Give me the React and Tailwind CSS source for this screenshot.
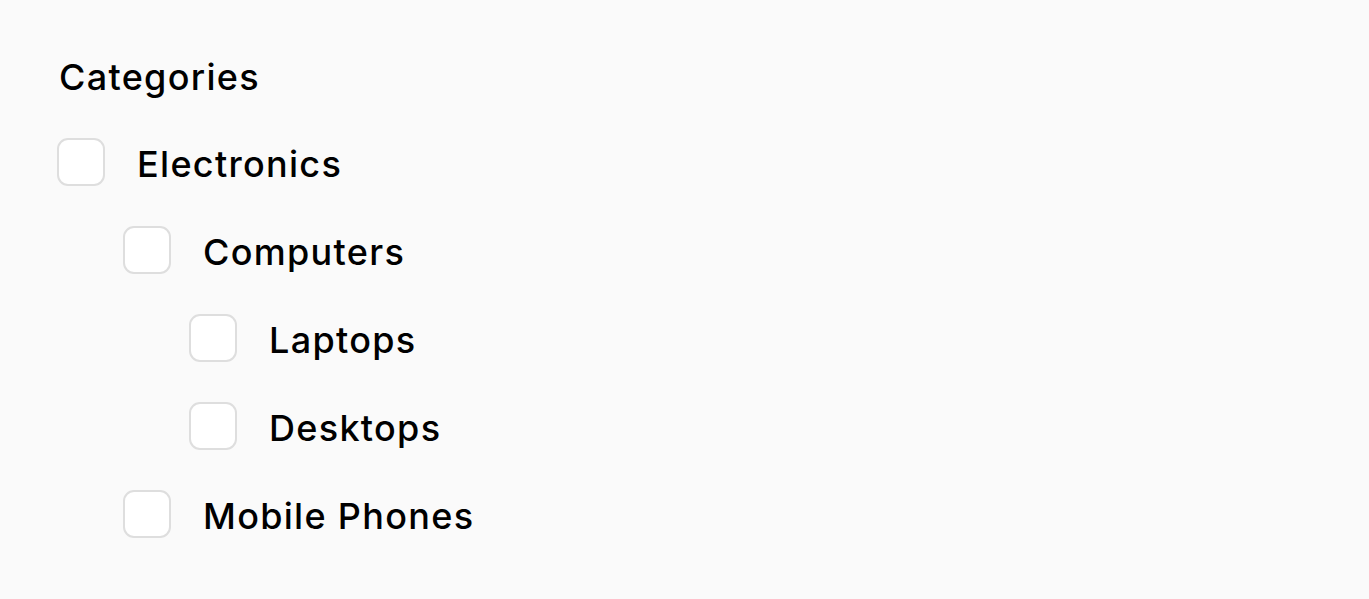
const categories = [
  { label: "Electronics", depth: 0 },
  { label: "Computers", depth: 1 },
  { label: "Laptops", depth: 2 },
  { label: "Desktops", depth: 2 },
  { label: "Mobile Phones", depth: 1 },
];

const indent = ["pl-0", "pl-[66px]", "pl-[132px]"];

function Row({ label, depth }) {
  return (
    <label className={`flex items-center h-[48px] gap-[32px] ${indent[depth]}`}>
      <span className="w-[48px] h-[48px] shrink-0 rounded-[11px] border-2 border-[#dedede] bg-white" />
      <span className="pt-[4px] text-[36px] leading-none font-[450] tracking-[1.3px] text-black">{label}</span>
    </label>
  );
}

export default function App() {
  return (
    <div
      className="min-h-[599px] w-full bg-[#fafafa] pl-[57px] pt-[49px]"
      style={{ fontFamily: "Inter, 'Noto Sans', sans-serif" }}
    >
      <h2 className="pl-[2px] text-[36px] leading-[56px] font-[450] tracking-[1.3px] text-black">Categories</h2>
      <div className="mt-[33px] flex flex-col gap-[40px]">
        {categories.map((c) => (
          <Row key={c.label} {...c} />
        ))}
      </div>
    </div>
  );
}
